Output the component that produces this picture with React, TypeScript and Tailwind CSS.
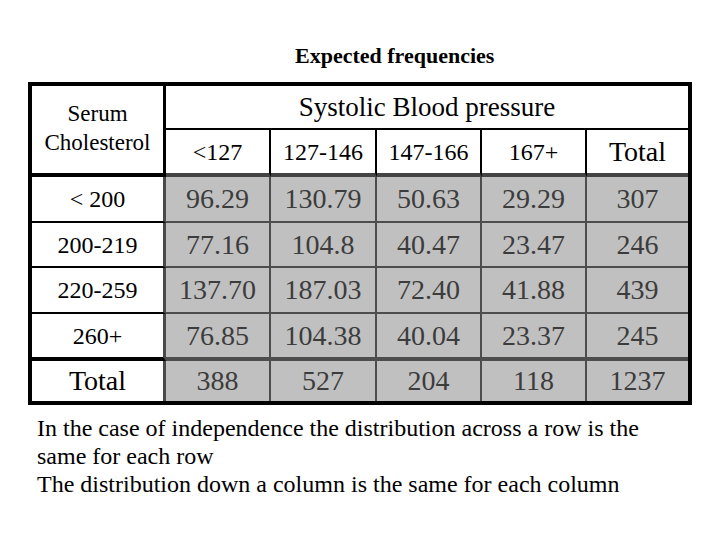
import React from 'react';

const rows = [
  { label: '< 200', values: ['96.29', '130.79', '50.63', '29.29', '307'], h: 'h-[46px]', last: 'border-b-2' },
  { label: '200-219', values: ['77.16', '104.8', '40.47', '23.47', '246'], h: 'h-[45px]', last: 'border-b-2' },
  { label: '220-259', values: ['137.70', '187.03', '72.40', '41.88', '439'], h: 'h-[46px]', last: 'border-b-2' },
  { label: '260+', values: ['76.85', '104.38', '40.04', '23.37', '245'], h: 'h-[47px]', last: 'border-b-4' },
];

const totals = ['388', '527', '204', '118', '1237'];
const headers = ['<127', '127-146', '147-166', '167+'];

// right borders for the five value columns (last one has none)
const colBorder = ['border-r-2', 'border-r-2', 'border-r-2', 'border-r-2', ''];

export default function App() {
  return (
    <div className="w-[720px] h-[540px] bg-white text-black overflow-hidden font-['Liberation_Serif','Times_New_Roman',serif]">
      <div className="pt-[42px] pl-[295px] h-[70px] text-[22px] leading-[28px] font-bold whitespace-nowrap">
        Expected frequencies
      </div>

      <div className="mt-[12px] ml-[28px] w-[664px] border-4 border-black grid grid-cols-[134px_105px_106px_105px_105px_101px]">
        {/* header */}
        <div className="row-span-2 border-r-[3px] border-b-4 border-black flex flex-col items-center justify-center text-[23px] leading-[29px] pb-[4px]">
          <span>Serum</span>
          <span>Cholesterol</span>
        </div>
        <div className="col-span-5 h-[44px] border-b-2 border-black flex items-center justify-center text-[27px] leading-none">
          Systolic Blood pressure
        </div>
        {headers.map((h) => (
          <div
            key={h}
            className="h-[47px] border-r-2 border-b-4 border-r-black border-b-[#444] flex items-center justify-center text-[24px] leading-none"
          >
            {h}
          </div>
        ))}
        <div className="h-[47px] border-b-4 border-b-[#444] flex items-center justify-center text-[28px] leading-none">
          Total
        </div>

        {/* data rows */}
        {rows.map((r) => (
          <React.Fragment key={r.label}>
            <div
              className={`${r.h} ${r.last} border-r-[3px] border-b-black border-r-[#4a4a4a] flex items-center justify-center text-[24px] leading-none`}
            >
              {r.label}
            </div>
            {r.values.map((v, i) => (
              <div
                key={i}
                className={`${r.h} ${r.last} ${colBorder[i]} border-[#4d4d4d] bg-[#c0c0c0] text-[#3c3c3c] flex items-center justify-center text-[28px] leading-none`}
              >
                {v}
              </div>
            ))}
          </React.Fragment>
        ))}

        {/* totals */}
        <div className="h-[40px] border-r-[3px] border-r-[#4a4a4a] flex items-center justify-center text-[28px] leading-none">
          Total
        </div>
        {totals.map((v, i) => (
          <div
            key={i}
            className={`h-[40px] ${colBorder[i]} border-[#4d4d4d] bg-[#c0c0c0] text-[#3c3c3c] flex items-center justify-center text-[28px] leading-none`}
          >
            {v}
          </div>
        ))}
      </div>

      <div className="mt-[9px] pl-[37px] text-[24px] leading-[28px] whitespace-nowrap">
        <div>In the case of independence the distribution across a row is the</div>
        <div>same for each row</div>
        <div>The distribution down a column is the same for each column</div>
      </div>
    </div>
  );
}
